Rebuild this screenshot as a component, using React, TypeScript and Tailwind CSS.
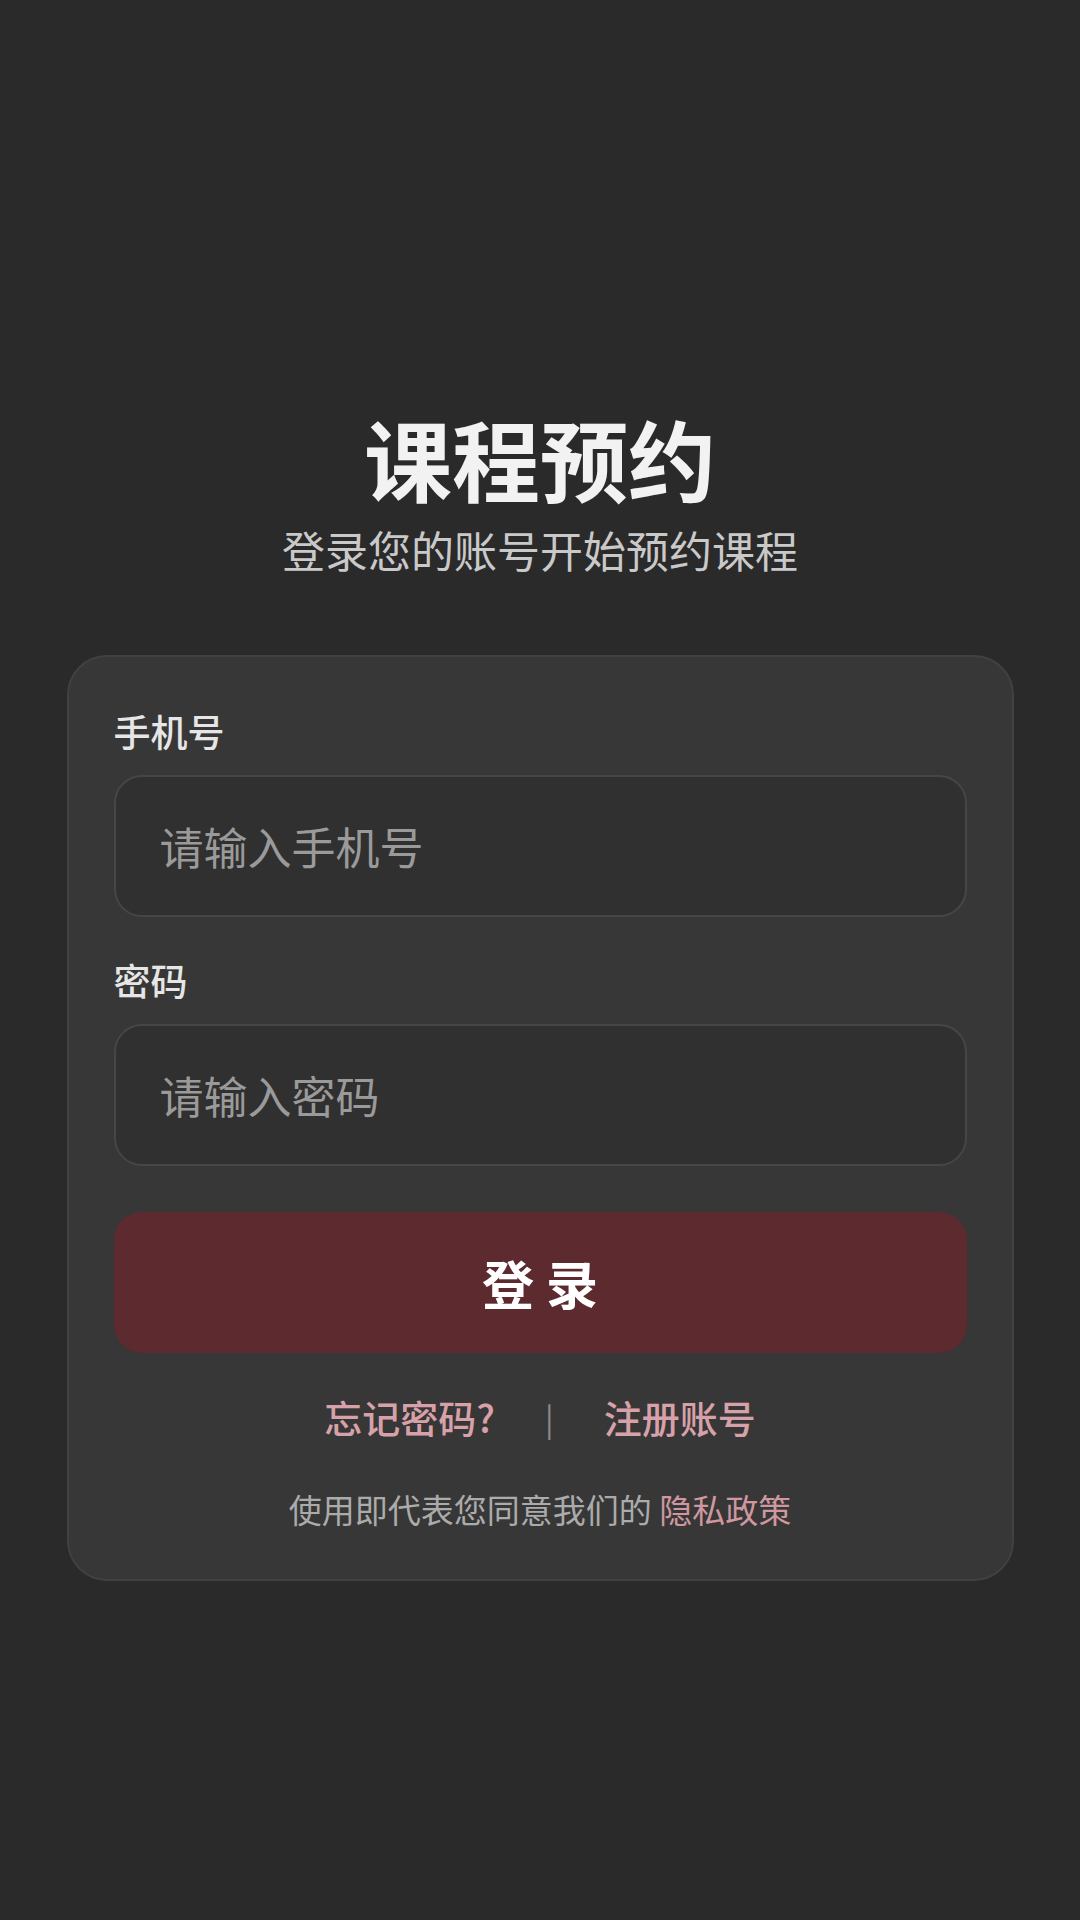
import React from "react";

const font = { fontFamily: '"Noto Sans CJK SC", "Noto Sans", sans-serif' };

const Field: React.FC<{ label: string; placeholder: string; type?: string; top: string }> = ({
  label,
  placeholder,
  type = "text",
  top,
}) => {
  return (
    <div className={`flex flex-col ${top}`}>
      <label className="text-[37px] leading-[44px] font-medium text-[#e6e6e6] mb-[22px]">{label}</label>
      <input
        type={type}
        placeholder={placeholder}
        className="h-[142px] w-full rounded-[28px] border-2 border-[#464646] bg-[#303030] px-[44px] text-[44px] text-[#e6e6e6] placeholder:text-[#9a9a9a] outline-none"
      />
    </div>
  );
};

const App: React.FC = () => {
  return (
    <div
      className="min-h-[1920px] w-full bg-[#2a2a2a] flex flex-col items-center pt-[405px]"
      style={font}
    >
      <h1 className="text-[88px] leading-[104px] font-bold text-[#f2f2f2]">课程预约</h1>
      <p className="mt-[14px] text-[43px] leading-[52px] text-[#c9c9c9]">登录您的账号开始预约课程</p>

      <div className="mt-[80px] w-[947px] rounded-[40px] border-2 border-[#414141] bg-[#373737] px-[45px] pt-[52px] pb-[50px]">
        <Field label="手机号" placeholder="请输入手机号" top="" />
        <Field label="密码" placeholder="请输入密码" type="password" top="mt-[41px]" />

        <button className="mt-[46px] h-[141px] w-full rounded-[28px] bg-[#5c2a2f] text-[52px] font-bold text-white">
          登 录
        </button>

        <div className="mt-[41px] flex items-center justify-center gap-[50px] text-[38px] leading-[46px] font-medium">
          <a href="#forgot" className="text-[#d7a1aa]">忘记密码?</a>
          <span className="text-[#8a8a8a] text-[32px] font-normal">|</span>
          <a href="#register" className="text-[#d7a1aa]">注册账号</a>
        </div>

        <p className="mt-[49px] text-center text-[33px] leading-[40px] text-[#ababab]">
          使用即代表您同意我们的 <a href="#privacy" className="text-[#cf97a0]">隐私政策</a>
        </p>
      </div>
    </div>
  );
};

export default App;
